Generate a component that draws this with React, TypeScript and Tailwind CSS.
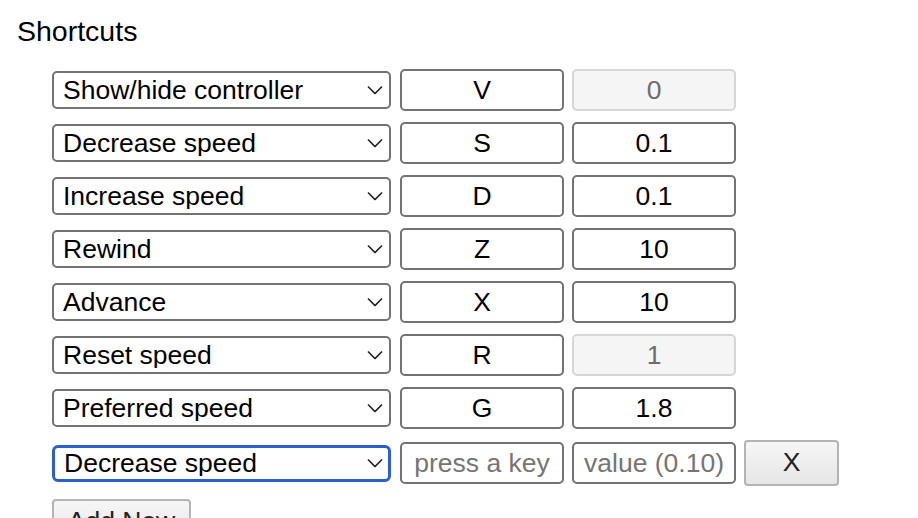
import { useState } from "react";

const actions = [
  "Show/hide controller",
  "Decrease speed",
  "Increase speed",
  "Rewind",
  "Advance",
  "Reset speed",
  "Preferred speed",
];

const shortcuts = [
  { action: "Show/hide controller", key: "V", value: "0", locked: true },
  { action: "Decrease speed", key: "S", value: "0.1" },
  { action: "Increase speed", key: "D", value: "0.1" },
  { action: "Rewind", key: "Z", value: "10" },
  { action: "Advance", key: "X", value: "10" },
  { action: "Reset speed", key: "R", value: "1", locked: true },
  { action: "Preferred speed", key: "G", value: "1.8" },
];

function Chevron() {
  return (
    <svg
      viewBox="0 0 16 9"
      className="pointer-events-none absolute right-[8px] top-1/2 h-[9px] w-[16px] -translate-y-1/2 text-[#222]"
      fill="none"
      stroke="currentColor"
      strokeWidth={1.6}
      aria-hidden="true"
    >
      <path d="M1 1l7 7 7-7" />
    </svg>
  );
}

function ActionSelect({ value, focused = false }: { value: string; focused?: boolean }) {
  return (
    <div className="relative w-[339px] shrink-0">
      <select
        defaultValue={value}
        className={`block w-full appearance-none bg-white pl-[9px] pr-8 text-[26.5px] leading-none text-black outline-none ${
          focused
            ? "h-[37px] rounded-[6px] border-[3px] border-[#2c5fcd] pl-[8px]"
            : "h-[38px] rounded-[5px] border-2 border-[#737373]"
        }`}
      >
        {actions.map((a) => (
          <option key={a}>{a}</option>
        ))}
      </select>
      <Chevron />
    </div>
  );
}

const inputBase =
  "h-[42px] w-[164px] shrink-0 rounded-[5px] border-2 px-2 text-center text-[26.5px] outline-none placeholder:text-[#757575]";

export default function App() {
  const [rows] = useState(shortcuts);

  return (
    <div className="min-h-screen bg-white font-['Liberation_Sans',Arial,sans-serif] text-black">
      <h3 className="pl-[17px] pt-[15px] text-[28.5px] font-normal leading-[32px]">Shortcuts</h3>

      <div className="mt-[22px] flex flex-col gap-[11px] pl-[52px]">
        {rows.map((r) => (
          <div key={r.action} className="flex items-center">
            <ActionSelect value={r.action} />
            <input
              readOnly
              defaultValue={r.key}
              className={`${inputBase} ml-[9px] border-[#737373] bg-white text-black`}
            />
            <input
              readOnly
              disabled={r.locked}
              defaultValue={r.value}
              className={`${inputBase} ml-[8px] ${
                r.locked
                  ? "border-[#d6d6d6] bg-[#f5f5f5] text-[#6d6d6d]"
                  : "border-[#737373] bg-white text-black"
              }`}
            />
          </div>
        ))}

        {/* new, unsaved shortcut row */}
        <div className="flex items-center">
          <ActionSelect value="Decrease speed" focused />
          <input
            placeholder="press a key"
            className={`${inputBase} ml-[9px] border-[#737373] bg-white`}
          />
          <input
            placeholder="value (0.10)"
            className={`${inputBase} ml-[8px] border-[#737373] bg-white`}
          />
          <button
            type="button"
            className="ml-[8px] h-[46px] w-[95px] rounded-[4px] border-2 border-[#b4b4b4] bg-gradient-to-b from-[#f6f6f6] to-[#e6e6e6] text-[26.5px] text-[#222]"
          >
            X
          </button>
        </div>

        <div className="pt-[2px]">
          <button
            type="button"
            className="h-[46px] w-[139px] rounded-[4px] border-2 border-[#b4b4b4] bg-gradient-to-b from-[#f6f6f6] to-[#e6e6e6] text-[26.5px] text-[#222]"
          >
            Add New
          </button>
        </div>
      </div>
    </div>
  );
}
